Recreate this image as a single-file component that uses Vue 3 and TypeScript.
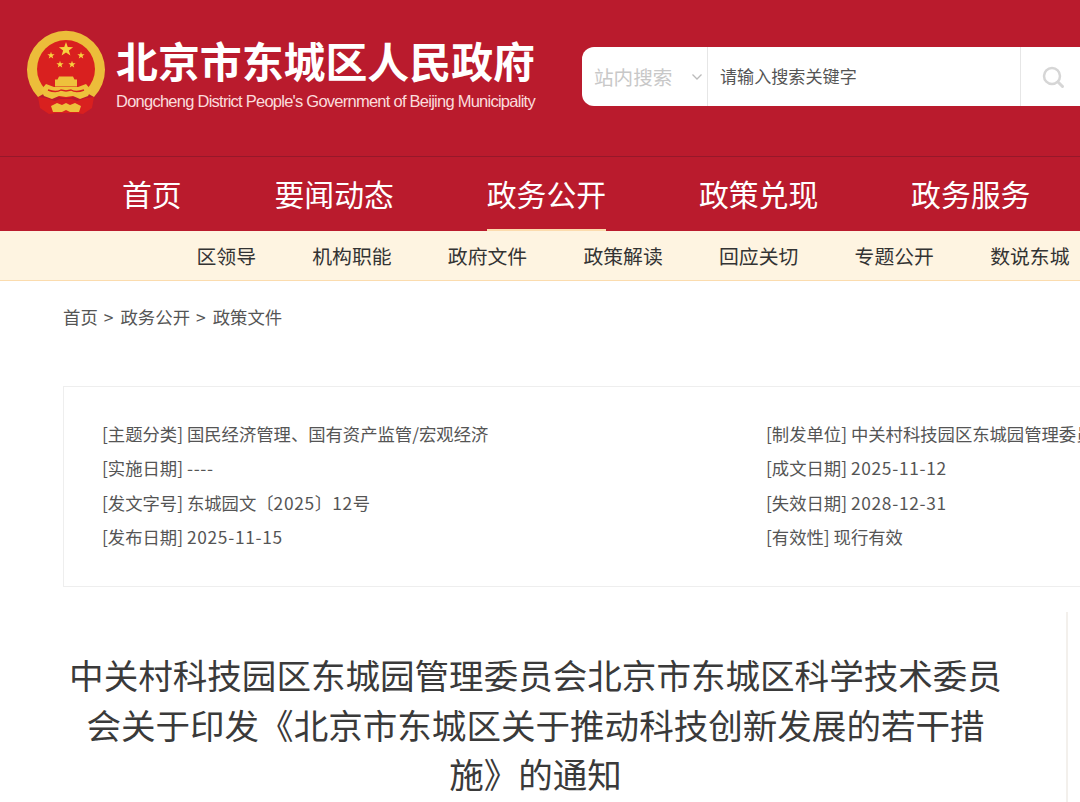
<template>
  <div class="page">
    <!-- 顶部红色头部 -->
    <header class="top">
      <svg class="emblem" width="80" height="86" viewBox="26 30 80 86" fill="none">
        <path d="M38 97A39 39 0 1 1 94 97L85 92H47Z" fill="#ecbd3a" />
        <circle cx="66" cy="69" r="29" fill="#d9201f" />
        <polygon v-for="s in stars" :key="s.x" :points="starPoints(s.x, s.y, s.r)" fill="#f7d23f" />
        <path d="M59 76.500h14l1.500 3h2.500v7H55v-7h2.500z" fill="#eec13c" />
        <path d="M46 84l8 3h24l8-3 5 6-3 6-8 3-7-3-7 1-7-1-7 3-8-3-3-6z" fill="#eec13c" />
        <path d="M48 90q8 3 13 0l5 1 5-1q5 3 13 0" stroke="#d9201f" stroke-width="1.400" />
        <path d="M38 97l8 1 9 3 5-2h12l5 2 9-3 8-1-2 11-9 6-7-1H56l-7 1-9-6z" fill="#d9201f" />
        <path d="M51 106l6-3 5 2 4-2 4 2 5-2 6 3-2 6h-9l-4-2-4 2h-9z" fill="#eec13c" />
      </svg>
      <div class="brand">
        <div class="brand-cn">北京市东城区人民政府</div>
        <div class="brand-en">Dongcheng District People's Government of Beijing Municipality</div>
      </div>
      <div class="search">
        <div class="search-scope">
          <span>站内搜索</span>
          <svg width="12" height="8" viewBox="0 0 12 8" fill="none">
            <path d="M1.500 1.500 6 6l4.500-4.500" stroke="#bbb" stroke-width="1.300" />
          </svg>
        </div>
        <div class="search-input">请输入搜索关键字</div>
        <div class="search-btn">
          <svg width="24" height="24" viewBox="0 0 24 24" fill="none">
            <circle cx="11" cy="11" r="8" stroke="#d6d6d6" stroke-width="2.500" />
            <path d="M17 17l4.500 4.500" stroke="#d6d6d6" stroke-width="3" stroke-linecap="round" />
          </svg>
        </div>
      </div>
    </header>

    <!-- 主导航 -->
    <nav class="nav">
      <a v-for="item in navItems" :key="item" class="nav-item" :class="{ 'nav-item--on': item === '政务公开' }">{{ item }}</a>
    </nav>

    <!-- 子导航 -->
    <nav class="subnav">
      <a v-for="item in subItems" :key="item" class="subnav-item">{{ item }}</a>
    </nav>

    <div class="crumbs">
      <template v-for="(item, i) in crumbs" :key="item">
        <span v-if="i > 0" class="crumb-sep">&gt;</span>{{ item }}
      </template>
    </div>

    <!-- 文件信息 -->
    <section class="meta">
      <div v-for="row in metaRows" :key="row.label" class="meta-row">
        [{{ row.label }}]
        <span v-for="(part, i) in splitDigits(row.value)" :key="i" :class="{ 'meta-num': i % 2 === 1 }">{{ part }}</span>
      </div>
    </section>

    <!-- 正文 -->
    <article class="article">
      <h1 class="title">中关村科技园区东城园管理委员会北京市东城区科学技术委员会关于印发《北京市东城区关于推动科技创新发展的若干措施》的通知</h1>
    </article>
  </div>
</template>

<script setup lang="ts">
interface MetaRow {
  label: string
  value: string
}

const navItems = ['首页', '要闻动态', '政务公开', '政策兑现', '政务服务']
const subItems = ['区领导', '机构职能', '政府文件', '政策解读', '回应关切', '专题公开', '数说东城']
const crumbs = ['首页', '政务公开', '政策文件']

const metaRows: MetaRow[] = [
  { label: '主题分类', value: '国民经济管理、国有资产监管/宏观经济' },
  { label: '制发单位', value: '中关村科技园区东城园管理委员会' },
  { label: '实施日期', value: '----' },
  { label: '成文日期', value: '2025-11-12' },
  { label: '发文字号', value: '东城园文〔2025〕12号' },
  { label: '失效日期', value: '2028-12-31' },
  { label: '发布日期', value: '2025-11-15' },
  { label: '有效性', value: '现行有效' },
]

const stars = [
  { x: 66, y: 49.5, r: 7.5 },
  { x: 51, y: 55.5, r: 3.8 },
  { x: 81, y: 55.5, r: 3.8 },
  { x: 60, y: 64.5, r: 3.8 },
  { x: 72, y: 64.5, r: 3.8 },
]

const starPoints = (cx: number, cy: number, r: number) =>
  Array.from({ length: 10 }, (_, i) => {
    const radius = i % 2 ? r * 0.4 : r
    const a = (i * Math.PI) / 5 - Math.PI / 2
    return `${(cx + radius * Math.cos(a)).toFixed(2)},${(cy + radius * Math.sin(a)).toFixed(2)}`
  }).join(' ')

// 数字段落字距略宽，奇数下标是数字
const splitDigits = (v: string) => v.split(/([\d-]+)/)
</script>

<style>
html, body { background: #fff; }
</style>

<style scoped>
.page {
  width: 1080px;
  height: 802px;
  overflow: hidden;
  background: #fff;
  font-family: "Noto Sans CJK SC", "Liberation Sans", sans-serif;
  color: #333;
}

.top {
  height: 157px;
  box-sizing: border-box;
  padding: 30px 0 0 26px;
  display: flex;
  align-items: flex-start;
  background: #ba1b2d;
  border-bottom: 1px solid #96182a;
}

.emblem { flex-shrink: 0; }

.brand {
  margin-left: 10px;
  width: 440px;
  flex-shrink: 0;
  color: #fff;
}

.brand-cn {
  margin-top: 2px;
  font-size: 41.9px;
  line-height: 56px;
  font-weight: 700;
  white-space: nowrap;
}

.brand-en {
  margin-top: 2px;
  font-family: "Liberation Sans", sans-serif;
  font-size: 16.5px;
  line-height: 22px;
  letter-spacing: -0.75px;
  color: #fbdcdc;
  white-space: nowrap;
}

.search {
  flex: 1;
  height: 59px;
  margin: 17px 0 0 26px;
  display: flex;
  background: #fff;
  border-radius: 12px 0 0 12px;
}

.search-scope {
  width: 126px;
  box-sizing: border-box;
  padding: 0 4px 0 12px;
  display: flex;
  align-items: center;
  justify-content: space-between;
  font-size: 19.6px;
  color: #c8c8c8;
  border-right: 1px solid #e6e6e6;
}

.search-input {
  flex: 1;
  padding-left: 12px;
  font-size: 17.1px;
  line-height: 57px;
  color: #555;
}

.search-btn {
  width: 60px;
  box-sizing: border-box;
  padding-left: 4px;
  display: flex;
  align-items: center;
  justify-content: center;
  border-left: 1px solid #e6e6e6;
}

.nav {
  height: 74px;
  padding-left: 122px;
  display: flex;
  gap: 92.8px;
  background: #ba1b2d;
}

.nav-item {
  position: relative;
  font-size: 29.85px;
  line-height: 72px;
  color: #fff;
  white-space: nowrap;
}

.nav-item--on::after {
  content: "";
  position: absolute;
  left: 0;
  right: 0;
  bottom: 0;
  height: 2px;
  background: #fbdcae;
}

.subnav {
  height: 50px;
  box-sizing: border-box;
  padding-left: 196.5px;
  display: flex;
  gap: 56.2px;
  background: #fef4e1;
  border-bottom: 1px solid #fbdcae;
}

.subnav-item {
  font-size: 19.85px;
  line-height: 49px;
  color: #333;
  white-space: nowrap;
}

.crumbs {
  margin: 23px 0 0 63px;
  font-size: 17.4px;
  line-height: 26px;
  color: #555;
}

.crumb-sep {
  margin: 0 7px 0 6px;
}

.meta {
  width: 1100px;
  height: 201px;
  box-sizing: border-box;
  margin: 56px 0 0 63px;
  padding: 30px 0 0 38px;
  display: grid;
  grid-template-columns: 664px 1fr;
  grid-auto-rows: 34.4px;
  border: 1px solid #eeeeee;
}

.meta-row {
  font-size: 17.33px;
  line-height: 34.4px;
  color: #555;
  white-space: nowrap;
  overflow: hidden;
}

.meta-num {
  letter-spacing: 0.7px;
}

.article {
  width: 1005px;
  height: 200px;
  box-sizing: border-box;
  margin: 25px 0 0 63px;
  padding: 38px 58px 0 0;
  border-right: 2px solid #f3f0ec;
}

.title {
  margin: 0;
  font-size: 34.55px;
  line-height: 49.5px;
  font-weight: 400;
  text-align: center;
  color: #3a3a3a;
}
</style>
